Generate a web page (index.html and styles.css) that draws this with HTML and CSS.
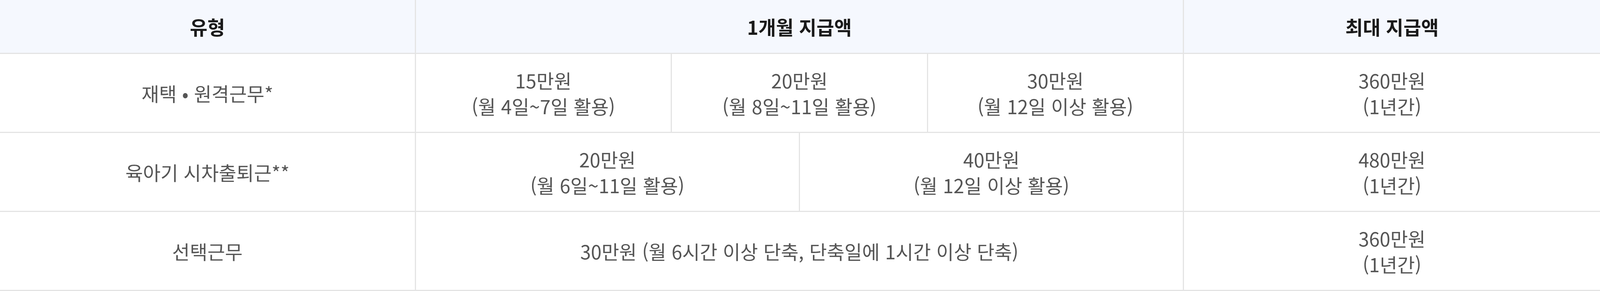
FILE: index.html
```html
<!DOCTYPE html>
<html lang="ko">
<head>
<meta charset="utf-8">
<title>지급액 표</title>
<link rel="stylesheet" href="styles.css">
</head>
<body>
<div class="pay-table" role="table">
  <div class="cell head">유형</div>
  <div class="cell head span-6">1개월 지급액</div>
  <div class="cell head last">최대 지급액</div>

  <div class="cell">재택 • 원격근무*</div>
  <div class="cell span-2">15만원<br>(월 4일~7일 활용)</div>
  <div class="cell span-2">20만원<br>(월 8일~11일 활용)</div>
  <div class="cell span-2">30만원<br>(월 12일 이상 활용)</div>
  <div class="cell last">360만원<br>(1년간)</div>

  <div class="cell">육아기 시차출퇴근**</div>
  <div class="cell span-3">20만원<br>(월 6일~11일 활용)</div>
  <div class="cell span-3">40만원<br>(월 12일 이상 활용)</div>
  <div class="cell last">480만원<br>(1년간)</div>

  <div class="cell">선택근무</div>
  <div class="cell span-6">30만원 (월 6시간 이상 단축, 단축일에 1시간 이상 단축)</div>
  <div class="cell last">360만원<br>(1년간)</div>
</div>
</body>
</html>
```
FILE: styles.css
```css
html, body {
  margin: 0;
  padding: 0;
  background: #ffffff;
  overflow: hidden;
}

.pay-table {
  display: grid;
  width: 100%;
  grid-template-columns: 26fr repeat(6, 8fr) 26fr;
  grid-template-rows: 138px 202px 202px 202px;
  font-family: "Noto Sans CJK KR", sans-serif;
  font-size: 49px;
  line-height: 66px;
  color: #555555;
}

.cell {
  box-sizing: border-box;
  display: flex;
  align-items: center;
  justify-content: center;
  text-align: center;
  padding: 0 10px;
  min-width: 0;
  overflow: hidden;
  border-right: 3px solid #e4e4e4;
  border-bottom: 3px solid #e4e4e4;
}

.cell.last {
  border-right: none;
}

.cell.head {
  background: #f5f8fe;
  color: #1a1a1a;
  font-weight: 700;
}

.span-2 { grid-column: span 2; }
.span-3 { grid-column: span 3; }
.span-6 { grid-column: span 6; }
```
